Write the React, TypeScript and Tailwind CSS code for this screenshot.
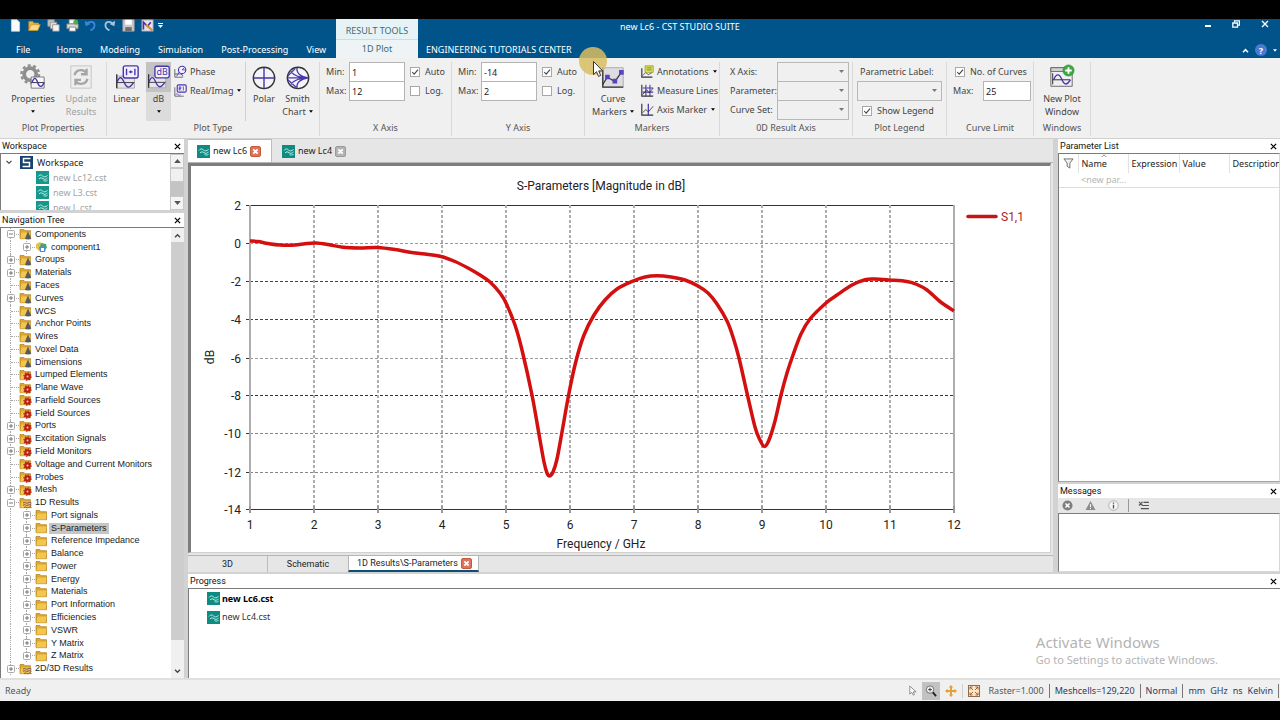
import React from "react";

const ui = "font-['Noto_Sans',sans-serif]";

/* ---------- small shared drawings ---------- */

function CloseX({ className = "size-[7px]" }: { className?: string }) {
  return (
    <svg viewBox="0 0 8 8" className={className} aria-hidden="true">
      <path d="M1 1l6 6M7 1L1 7" stroke="currentColor" strokeWidth="1.4" fill="none" />
    </svg>
  );
}

function Caret({ className = "w-[5px] h-[3px]" }: { className?: string }) {
  return (
    <svg viewBox="0 0 5 3" className={className} aria-hidden="true">
      <path d="M0 0h5L2.5 3z" fill="currentColor" />
    </svg>
  );
}

function CstIcon({ faded = false }: { faded?: boolean }) {
  return (
    <svg viewBox="0 0 13 13" className="size-[13px] shrink-0" aria-hidden="true">
      <rect width="13" height="13" fill={faded ? "#17978c" : "#0e8c82"} />
      <path
        d="M2 5.500c1.500-2 3-2 4.500-.5S9.500 6 11.500 4.500M3 8c1.500-1.500 2.500-1.500 4-.3s3 .5 4.500-.7M7.500 9.600c1.300.6 2.500.5 4-.2"
        stroke="#b9efe9"
        strokeWidth="1"
        fill="none"
      />
    </svg>
  );
}

function TabClose({ active, label }: { active: boolean; label: string }) {
  return (
    <button
      aria-label={label}
      className={
        active
          ? "flex size-[11px] items-center justify-center rounded-[2px] border border-[#c65a3f] bg-[#dd735a] text-white"
          : "flex size-[11px] items-center justify-center rounded-[2px] border border-[#9a9a9a] bg-[#b4b4b4] text-white"
      }
    >
      <svg viewBox="0 0 8 8" className="size-[7px]" aria-hidden="true">
        <path d="M1.500 1.500l5 5M6.500 1.500l-5 5" stroke="currentColor" strokeWidth="2" />
      </svg>
    </button>
  );
}

function PanelTitle({ title }: { title: string }) {
  return (
    <div className="flex h-[14px] shrink-0 items-center justify-between bg-white pr-[3px] pl-[2px] font-['Roboto',sans-serif] text-[9px] leading-[14px] text-[#111]">
      <h2>{title}</h2>
      <button aria-label={`Close ${title}`} className="text-black">
        <CloseX />
      </button>
    </div>
  );
}

/* ---------- title bar ---------- */

const quickIcons: { name: string; art: React.ReactNode }[] = [
  { name: "New", art: <path d="M3 1h7l3 3v11H3z" fill="#fafafa" stroke="#ccd6de" /> },
  {
    name: "Open",
    art: (
      <>
        <path d="M1 14V3h5l1 2h6v3" fill="#e9b84e" stroke="#b98822" />
        <path d="M1 14l3-7h11l-3 7z" fill="#fbdc85" stroke="#d19a2c" />
      </>
    ),
  },
  {
    name: "Copy view",
    art: (
      <>
        <path d="M1 1h8v8H1z" fill="#c7c7c7" stroke="#8e8e8e" />
        <path d="M4 4h8v8H4z" fill="#dedede" stroke="#8e8e8e" />
        <path d="M7 7h8v8H7z" fill="#f4f4f4" stroke="#8e8e8e" />
      </>
    ),
  },
  {
    name: "Print",
    art: (
      <>
        <path d="M4 1h7v5H4z" fill="#fff" stroke="#aaa" />
        <path d="M1 6h14v6H1z" fill="#d8d8d8" stroke="#777" />
        <path d="M4 10h8v5H4z" fill="#fff" stroke="#777" />
        <circle cx="12" cy="4" r="3" fill="#47b04b" />
      </>
    ),
  },
  {
    name: "Undo",
    art: (
      <>
        <path d="M1 2l1 7 6-3z" fill="#3f86d8" />
        <path d="M4 6c3-4 9-3 9 1.500C13 11 10.500 13 8 14" fill="none" stroke="#3f86d8" strokeWidth="2.200" />
      </>
    ),
  },
  {
    name: "Redo",
    art: (
      <>
        <path d="M15 2l-1 7-6-3z" fill="#a9c3d6" />
        <path d="M12 6C9 2 3 3 3 7.500 3 11 5.500 13 8 14" fill="none" stroke="#a9c3d6" strokeWidth="2.200" />
      </>
    ),
  },
  {
    name: "Save",
    art: (
      <>
        <path d="M1 1h14v14H1z" fill="#c9c9c9" stroke="#9a9a9a" />
        <path d="M4 1h8v6H4z" fill="#fff" />
        <path d="M4 10h8v5H4z" fill="#6f6f6f" />
      </>
    ),
  },
  {
    name: "Macro",
    art: (
      <>
        <path d="M1 1h14v14H1z" fill="#e6e2f0" stroke="#8d8d9b" />
        <path d="M3 13V4l5 5 4-5" stroke="#45389c" strokeWidth="2" fill="none" />
        <path d="M6 7l8 7" stroke="#e0912d" strokeWidth="2.500" />
      </>
    ),
  },
];

const tabs = ["Home", "Modeling", "Simulation", "Post-Processing", "View"];

function TitleBar() {
  return (
    <header className="flex h-[39px] shrink-0 bg-[#00548a] text-[9px] text-white">
      <div className="flex w-[336px] shrink-0 flex-col">
        <div className="flex h-[13px] items-center">
          <div className="flex w-[154px] items-center justify-between pl-[9px]">
            {quickIcons.map((q) => (
              <button key={q.name} aria-label={q.name}>
                <svg viewBox="0 0 16 16" className="size-[13px]" aria-hidden="true">
                  {q.art}
                </svg>
              </button>
            ))}
          </div>
          <button aria-label="Customize quick access" className="ml-[4px] flex flex-col items-center gap-px">
            <span className="h-px w-[5px] bg-white" />
            <Caret />
          </button>
        </div>
        <nav className="flex flex-1 items-end gap-[18px] pb-px pl-[16px] leading-[14px]">
          <button className="mr-[8px]">File</button>
          {tabs.map((t) => (
            <button key={t} className="whitespace-nowrap">
              {t}
            </button>
          ))}
        </nav>
      </div>
      <div className="flex w-[82px] shrink-0 flex-col bg-[#eef4f6] text-center text-[#44686f]">
        <div className="flex h-[21px] items-end justify-center border-b border-[#c9dde2] bg-[#e6f3f6] leading-[16px] whitespace-nowrap">RESULT TOOLS</div>
        <button className="flex-1 leading-[18px]">1D Plot</button>
      </div>
      <div className="flex min-w-0 flex-1 flex-col justify-between pl-[8px]">
        <div className="flex h-[16px] items-center justify-between">
          <h1 className="pl-[194px] leading-[14px]">new Lc6 - CST STUDIO SUITE</h1>
          <div className="flex items-center gap-[21px] pr-[11px] pb-[6px]">
            <button aria-label="Minimize" className="pt-[4px]">
              <span className="block h-[2px] w-[6px] bg-white" />
            </button>
            <button aria-label="Restore">
              <svg viewBox="0 0 8 8" className="size-[8px]" aria-hidden="true">
                <path d="M2.500 2V.8h5v4.400H6M.8 3h4.700v4.200H.8z" stroke="#fff" strokeWidth="1.300" fill="none" />
              </svg>
            </button>
            <button aria-label="Close window">
              <CloseX className="size-[8px]" />
            </button>
          </div>
        </div>
        <div className="flex items-center justify-between pb-px">
          <button className="leading-[14px]">ENGINEERING TUTORIALS CENTER</button>
          <div className="flex items-center gap-[6px] pr-[3px]">
            <button aria-label="Collapse ribbon">
              <svg viewBox="0 0 8 6" className="h-[5px] w-[7px]" aria-hidden="true">
                <path d="M1 5l3-3 3 3" stroke="#fff" strokeWidth="1.800" fill="none" />
              </svg>
            </button>
            <button aria-label="Help" className="flex size-[12px] items-center justify-center rounded-full bg-[#4a7ad0] text-[9px] leading-none font-bold">
              ?
            </button>
            <Caret className="h-[3px] w-[4px]" />
          </div>
        </div>
      </div>
    </header>
  );
}

/* ---------- ribbon ---------- */

const purple = "#4636a8";

function SineFrame() {
  return (
    <>
      <path d="M3 13h19v13H3z" fill="#e6e6ea" stroke="#aaa" />
      <path d="M3 20h19" stroke="#333" strokeWidth="1" />
      <path d="M3 11v15" stroke="#222" strokeWidth="1.300" />
      <path d="M3 20c3-7 5-7 8 0s6 6 10 0" stroke={purple} strokeWidth="1.500" fill="none" />
    </>
  );
}

function Group({ label, width, children }: { label: string; width: string; children: React.ReactNode }) {
  return (
    <section className={`flex shrink-0 flex-col border-r border-[#d9d9d9] ${width}`}>
      <div className="flex h-[59px] min-w-0">{children}</div>
      <h2 className="text-center leading-[14px] text-[#555]">{label}</h2>
    </section>
  );
}

function BigButton({
  icon,
  line1,
  line2,
  caret = false,
  active = false,
  disabled = false,
  width,
}: {
  icon: React.ReactNode;
  line1: string;
  line2?: string;
  caret?: boolean;
  active?: boolean;
  disabled?: boolean;
  width: string;
}) {
  return (
    <button
      disabled={disabled}
      className={`flex shrink-0 flex-col items-center leading-[13px] whitespace-nowrap ${width} ${active ? "bg-[#dcdcdc]" : ""} ${disabled ? "text-[#a0a0a0]" : "text-[#444]"}`}
    >
      <span className={`flex h-[30px] w-full items-center justify-center ${active ? "bg-[#c3c3c3]" : ""}`}>
        <svg viewBox="0 0 28 28" className="size-[26px]" aria-hidden="true">
          {icon}
        </svg>
      </span>
      <span>{line1}</span>
      <span className="flex h-[13px] items-center gap-[3px]">
        {line2}
        {caret && <Caret className="h-[3px] w-[4px] text-black" />}
      </span>
    </button>
  );
}

function SmallButton({ icon, label, caret = false }: { icon: React.ReactNode; label: string; caret?: boolean }) {
  return (
    <button className="flex h-[19px] items-center gap-[3px] whitespace-nowrap">
      <svg viewBox="0 0 16 16" className="size-[13px] shrink-0" aria-hidden="true">
        {icon}
      </svg>
      {label}
      {caret && <Caret className="ml-px h-[3px] w-[4px] text-black" />}
    </button>
  );
}

function Check({ id, label, on = false }: { id: string; label: string; on?: boolean }) {
  return (
    <label htmlFor={id} className="flex h-[19px] items-center gap-[5px] whitespace-nowrap">
      <span className="grid">
        <input
          id={id}
          type="checkbox"
          defaultChecked={on}
          className="peer col-start-1 row-start-1 size-[10px] appearance-none border border-[#a8a8a8] bg-white"
        />
        <svg viewBox="0 0 10 10" className="pointer-events-none invisible col-start-1 row-start-1 size-[10px] peer-checked:visible" aria-hidden="true">
          <path d="M2.200 5l2 2.200L8 2.600" stroke="#444" strokeWidth="1.100" fill="none" />
        </svg>
      </span>
      {label}
    </label>
  );
}

function AxisFields({ axis, min, max }: { axis: string; min: string; max: string }) {
  const box = "h-[20px] w-[56px] border border-[#b4b4b4] bg-white px-[2px] text-[#222] outline-none";
  return (
    <div className="flex pl-[6px]">
      <div className="flex w-[23px] flex-col">
        <label htmlFor={`${axis}-min`} className="leading-[19px]">Min:</label>
        <label htmlFor={`${axis}-max`} className="leading-[19px]">Max:</label>
      </div>
      <div className="mr-[5px] flex flex-col -space-y-px">
        <input id={`${axis}-min`} defaultValue={min} className={box} />
        <input id={`${axis}-max`} defaultValue={max} className={box} />
      </div>
      <div className="flex flex-col">
        <Check id={`${axis}-auto`} label="Auto" on />
        <Check id={`${axis}-log`} label="Log." />
      </div>
    </div>
  );
}

function DropDown({ id, width }: { id: string; width: string }) {
  return (
    <span className={`relative block ${width}`}>
      <select id={id} className="block h-[20px] w-full appearance-none border border-[#b8b8b8] bg-[#f0f0f0]">
        <option value="" />
      </select>
      <Caret className="pointer-events-none absolute top-[8px] right-[5px] h-[3px] w-[5px] text-[#777]" />
    </span>
  );
}

function Ribbon() {
  return (
    <div className="flex h-[81px] shrink-0 border-b border-[#d0d0d0] bg-[#f0f0f0] pt-[4px] pb-[2px] text-[9px] text-[#444]">
      <Group label="Plot Properties" width="w-[107px]">
        <BigButton
          width="w-[66px]"
          line1="Properties"
          caret
          icon={
            <>
              <circle cx="11" cy="11" r="6.500" fill="none" stroke="#8e8e8e" strokeWidth="4" />
              <circle cx="11" cy="11" r="9.500" fill="none" stroke="#8e8e8e" strokeWidth="2.600" strokeDasharray="3.200 2.770" />
              <path d="M12 14h14v12H12z" fill="#f6f6fa" stroke="#777" />
              <path d="M12 20h14" stroke="#333" />
              <path d="M13 20c2-6 4-6 6 0s5 5 7 0" stroke={purple} strokeWidth="1.500" fill="none" />
            </>
          }
        />
        <BigButton
          width="w-[30px]"
          line1="Update"
          line2="Results"
          disabled
          icon={
            <>
              <path d="M3 2h22v24H3z" fill="#eee" stroke="#c2c2c2" />
              <path d="M7 12c2-7 11-7 13-1M20 5v6h-6M21 16c-2 7-11 7-13 1M8 23v-6h6" stroke="#a5a5a5" strokeWidth="2.500" fill="none" />
            </>
          }
        />
      </Group>
      <Group label="Plot Type" width="w-[213px]">
        <BigButton
          width="w-[39px]"
          line1="Linear"
          icon={
            <>
              <SineFrame />
              <rect x="10" y="2" width="16" height="13" rx="2" fill="#f3f1ff" stroke={purple} strokeWidth="1.500" />
              <path d="M13.500 5v7M22.500 5v7M16 8.500h4M18 7v3" stroke={purple} strokeWidth="1.500" />
            </>
          }
        />
        <BigButton
          width="w-[25px]"
          line1="dB"
          caret
          active
          icon={
            <>
              <SineFrame />
              <rect x="10" y="2" width="16" height="13" rx="2" fill="#f3f1ff" stroke={purple} strokeWidth="1.500" />
              <text x="18" y="12" fontSize="10" textAnchor="middle" fill={purple} fontFamily="Noto Sans, sans-serif">dB</text>
            </>
          }
        />
        <div className="flex w-[75px] shrink-0 flex-col border-r border-[#d0d0d0] pl-[3px]">
          <SmallButton
            label="Phase"
            icon={
              <>
                <path d="M1 5v10h10" stroke="#555" fill="none" />
                <path d="M1 11h10M3 14l4-6 4 6" stroke={purple} fill="none" />
                <circle cx="10" cy="6" r="4.500" fill="#f3f1ff" stroke={purple} strokeWidth="1.400" />
                <path d="M10 6l3-3M10 6h4" stroke={purple} />
              </>
            }
          />
          <SmallButton
            label="Real/Imag"
            caret
            icon={
              <>
                <path d="M1 4v11h11" stroke="#555" fill="none" />
                <path d="M2 13c2-3 4 3 6 0" stroke={purple} fill="none" />
                <rect x="4" y="1" width="11" height="9" rx="1.500" fill="#f3f1ff" stroke={purple} strokeWidth="1.400" />
                <path d="M6.500 8V3.500h2v2h-2l2 2.500M11.500 3v5" stroke={purple} fill="none" />
              </>
            }
          />
        </div>
        <BigButton
          width="w-[36px]"
          line1="Polar"
          icon={
            <>
              <circle cx="14" cy="15" r="11.500" fill="#f4f4fb" stroke="#333" strokeWidth="1.500" />
              <path d="M14 4v22M3 15h22" stroke={purple} strokeWidth="1.500" />
            </>
          }
        />
        <BigButton
          width="w-[31px]"
          line1="Smith"
          line2="Chart"
          caret
          icon={
            <>
              <circle cx="14" cy="15" r="11.500" fill="#f4f4fb" stroke="#333" strokeWidth="1.500" />
              <path d="M3 15h22M6 8c5 6 12 7 19 7M6 22c5-6 12-7 19-7M13 4c-1 6 4 10 12 11M13 26c-1-6 4-10 12-11M3 13l8-8M3 17l9 8" stroke={purple} strokeWidth="1.400" fill="none" />
            </>
          }
        />
      </Group>
      <Group label="X Axis" width="w-[132px]">
        <AxisFields axis="x" min="1" max="12" />
      </Group>
      <Group label="Y Axis" width="w-[133px]">
        <AxisFields axis="y" min="-14" max="2" />
      </Group>
      <Group label="Markers" width="w-[135px]">
        <BigButton
          width="w-[56px]"
          line1="Curve"
          line2="Markers"
          caret
          icon={
            <>
              <path d="M3 4h22v21H3z" fill="#dcdce2" stroke="#aaa" />
              <path d="M3 4v21h22" stroke="#333" strokeWidth="1.400" fill="none" />
              <path d="M3 22L8 14l8 5 7-10" stroke="#333" strokeWidth="1.300" fill="none" />
              <path d="M5.500 11.500h5v5h-5zM13.500 16h5v5h-5zM20.500 6.500h5v5h-5z" fill="#5546bd" />
            </>
          }
        />
        <div className="flex flex-col">
          <SmallButton
            label="Annotations"
            caret
            icon={
              <>
                <path d="M1 4v11h13" stroke="#333" strokeWidth="1.400" fill="none" />
                <path d="M2 13l4-4 3 3 5-3" stroke={purple} fill="none" />
                <path d="M5 1h10v8H9l-2 2V9H5z" fill="#dfe35c" stroke="#979b22" />
                <path d="M7 3.500h6M7 6h6" stroke="#73761a" />
              </>
            }
          />
          <SmallButton
            label="Measure Lines"
            icon={
              <>
                <path d="M1 1v14h14" stroke="#333" strokeWidth="1.400" fill="none" />
                <path d="M2 5h13M2 10h13M6 1v14M11 1v14" stroke={purple} strokeWidth="1.300" />
                <path d="M2 13l5-6 3 4 5-6" stroke="#333" fill="none" />
              </>
            }
          />
          <SmallButton
            label="Axis Marker"
            caret
            icon={
              <>
                <path d="M1 1v14h14" stroke="#333" strokeWidth="1.400" fill="none" />
                <path d="M9 1v14" stroke={purple} strokeWidth="1.500" />
                <path d="M2 12l4-4 3 3 6-7" stroke="#333" fill="none" />
              </>
            }
          />
        </div>
      </Group>
      <Group label="0D Result Axis" width="w-[133px]">
        <div className="flex w-[57px] shrink-0 flex-col pl-[10px] leading-[19px] whitespace-nowrap">
          <label htmlFor="zx">X Axis:</label>
          <label htmlFor="zp">Parameter:</label>
          <label htmlFor="zc">Curve Set:</label>
        </div>
        <div className="flex flex-1 flex-col -space-y-px pr-[3px]">
          <DropDown id="zx" width="w-full" />
          <DropDown id="zp" width="w-full" />
          <DropDown id="zc" width="w-full" />
        </div>
      </Group>
      <Group label="Plot Legend" width="w-[94px]">
        <div className="flex flex-1 flex-col pr-[4px] pl-[4px]">
          <label htmlFor="plabel" className="pl-[3px] leading-[19px] whitespace-nowrap">Parametric Label:</label>
          <DropDown id="plabel" width="w-full" />
          <div className="pl-[5px]">
            <Check id="showlegend" label="Show Legend" on />
          </div>
        </div>
      </Group>
      <Group label="Curve Limit" width="w-[87px]">
        <div className="flex flex-col pl-[6px]">
          <div className="pl-[2px]">
            <Check id="nocurves" label="No. of Curves" on />
          </div>
          <div className="flex">
            <label htmlFor="climit" className="w-[30px] leading-[19px]">Max:</label>
            <input id="climit" defaultValue="25" className="h-[20px] w-[48px] border border-[#b4b4b4] bg-white px-[2px] text-[#222] outline-none" />
          </div>
        </div>
      </Group>
      <Group label="Windows" width="w-[57px]">
        <BigButton
          width="w-full"
          line1="New Plot"
          line2="Window"
          icon={
            <>
              <path d="M2 4h23v20H2z" fill="#efeff2" stroke="#666" />
              <path d="M2 4h23v4H2z" fill="#d4d4d4" stroke="#666" />
              <path d="M4 17h19M4 10v12" stroke="#222" />
              <path d="M5 17c3-7 6-7 9 0s6 5 9 0" stroke={purple} strokeWidth="1.500" fill="none" />
              <circle cx="21" cy="7" r="6" fill="#3fa845" stroke="#2a7d30" strokeWidth=".6" />
              <path d="M21 3.500v7M17.500 7h7" stroke="#fff" strokeWidth="2" />
            </>
          }
        />
      </Group>
    </div>
  );
}

/* ---------- workspace and navigation tree ---------- */

function Workspace() {
  return (
    <section className="flex flex-col bg-white">
      <PanelTitle title="Workspace" />
      <div className="flex h-[57px] overflow-hidden border-t border-l border-[#7b7b7b]">
        <ul className="flex-1 overflow-hidden text-[9px] leading-[15px] text-[#a3a3a3]">
          <li className="flex h-[16px] items-center gap-[4px] pl-[4px] text-[#222]">
            <svg viewBox="0 0 8 6" className="mr-[3px] h-[5px] w-[8px]" aria-hidden="true">
              <path d="M1 1l3 3 3-3" stroke="#333" strokeWidth="1.300" fill="none" />
            </svg>
            <svg viewBox="0 0 13 13" className="size-[13px]" aria-hidden="true">
              <rect width="13" height="13" fill="#15416f" />
              <path d="M10.500 2.500h-7v4h6v4h-7" stroke="#fff" strokeWidth="1.500" fill="none" />
            </svg>
            Workspace
          </li>
          {["new Lc12.cst", "new L3.cst", "new L.cst"].map((f) => (
            <li key={f} className="flex h-[15px] items-center gap-[4px] pl-[35px]">
              <CstIcon faded />
              {f}
            </li>
          ))}
        </ul>
        <div className="flex w-[14px] flex-col bg-[#c4c4c4] text-[#555]">
          <button aria-label="Scroll up" className="flex h-[14px] items-center justify-center border border-[#c8c8c8] bg-[#f4f4f4]">
            <Caret className="h-[4px] w-[7px] rotate-180" />
          </button>
          <div className="h-[14px] border border-[#c8c8c8] bg-[#f0f0f0]" />
          <button aria-label="Scroll down" className="mt-auto flex h-[14px] items-center justify-center border border-[#c8c8c8] bg-[#f4f4f4]">
            <Caret className="h-[4px] w-[7px]" />
          </button>
        </div>
      </div>
    </section>
  );
}

type Mark = "cone" | "gear" | "waves" | "none" | "part";
type Node = { name: string; mark: Mark; toggle?: "+" | "-"; child?: boolean; selected?: boolean };

const nodes: Node[] = [
  { name: "Components", mark: "cone", toggle: "-" },
  { name: "component1", mark: "part", toggle: "+", child: true },
  { name: "Groups", mark: "cone", toggle: "+" },
  { name: "Materials", mark: "cone", toggle: "+" },
  { name: "Faces", mark: "cone" },
  { name: "Curves", mark: "cone", toggle: "+" },
  { name: "WCS", mark: "cone" },
  { name: "Anchor Points", mark: "cone" },
  { name: "Wires", mark: "cone" },
  { name: "Voxel Data", mark: "cone" },
  { name: "Dimensions", mark: "cone" },
  { name: "Lumped Elements", mark: "gear" },
  { name: "Plane Wave", mark: "gear" },
  { name: "Farfield Sources", mark: "gear" },
  { name: "Field Sources", mark: "gear" },
  { name: "Ports", mark: "gear", toggle: "+" },
  { name: "Excitation Signals", mark: "gear", toggle: "+" },
  { name: "Field Monitors", mark: "gear", toggle: "+" },
  { name: "Voltage and Current Monitors", mark: "gear" },
  { name: "Probes", mark: "gear" },
  { name: "Mesh", mark: "gear", toggle: "+" },
  { name: "1D Results", mark: "waves", toggle: "-" },
  { name: "Port signals", mark: "none", toggle: "+", child: true },
  { name: "S-Parameters", mark: "none", toggle: "+", child: true, selected: true },
  { name: "Reference Impedance", mark: "none", toggle: "+", child: true },
  { name: "Balance", mark: "none", toggle: "+", child: true },
  { name: "Power", mark: "none", toggle: "+", child: true },
  { name: "Energy", mark: "none", toggle: "+", child: true },
  { name: "Materials", mark: "none", toggle: "+", child: true },
  { name: "Port Information", mark: "none", toggle: "+", child: true },
  { name: "Efficiencies", mark: "none", toggle: "+", child: true },
  { name: "VSWR", mark: "none", toggle: "+", child: true },
  { name: "Y Matrix", mark: "none", toggle: "+", child: true },
  { name: "Z Matrix", mark: "none", toggle: "+", child: true },
  { name: "2D/3D Results", mark: "waves", toggle: "+" },
];

function FolderIcon({ mark }: { mark: Mark }) {
  if (mark === "part") {
    return (
      <svg viewBox="0 0 13 12" className="h-[12px] w-[13px] shrink-0" aria-hidden="true">
        <path d="M1 3l4-2 3 2v5L4 10 1 7z" fill="#e3c24b" />
        <path d="M6 2l5 1 1 4-4 2-3-3z" fill="#4aa85d" />
        <path d="M4 6l4-1 3 2-1 4-5 0z" fill="#4c8be0" />
        <path d="M6 7h3v3H6z" fill="#fff" />
      </svg>
    );
  }
  return (
    <svg viewBox="0 0 13 12" className="h-[12px] w-[13px] shrink-0" aria-hidden="true">
      <path d="M1 1.500h4l1 1.200h5.500v8H1z" fill="#dda62c" stroke="#b07f1a" strokeWidth=".7" />
      <path d="M1.300 10.500L2.500 4.500h9l-.8 6z" fill="#f3c650" />
      {mark === "cone" && <path d="M9 3.500l3.200 7c-1 1.200-5 1.200-6.200 0z" fill="#575a60" />}
      {mark === "gear" && (
        <>
          <circle cx="8.500" cy="7.500" r="3.300" fill="#bd2018" />
          <circle cx="8.500" cy="7.500" r="3.600" fill="none" stroke="#bd2018" strokeWidth="1.300" strokeDasharray="1.400 1.400" />
          <circle cx="8.500" cy="7.500" r="1" fill="#f5c7a8" />
        </>
      )}
      {mark === "waves" && (
        <path d="M4 6c2-1.500 3 1 5 0s2-.5 3.500 0M4 8.200c2-1.500 3 1 5 0s2-.5 3.500 0M5 10.500c2-1.500 3 1 4.500 0s2-.5 3 0" stroke="#7a5160" strokeWidth="1" fill="none" />
      )}
    </svg>
  );
}

function TreeCell({ toggle, branch }: { toggle?: "+" | "-"; branch: boolean }) {
  return (
    <span className="relative flex h-full w-[16px] shrink-0 items-center justify-center">
      <span className="absolute inset-y-0 left-[7px] border-l border-dotted border-[#a8a8a8]" />
      {branch && <span className="absolute right-0 left-[8px] border-t border-dotted border-[#a8a8a8]" />}
      {toggle && (
        <svg viewBox="0 0 8 8" className="relative size-[8px]" aria-hidden="true">
          <rect x=".5" y=".5" width="7" height="7" rx="1" fill="#fff" stroke="#a8a8a8" />
          <path d={toggle === "+" ? "M2 4h4M4 2v4" : "M2 4h4"} stroke="#555" strokeWidth=".8" />
        </svg>
      )}
    </span>
  );
}

function NavigationTree() {
  return (
    <section className="flex min-h-0 flex-1 flex-col bg-white">
      <PanelTitle title="Navigation Tree" />
      <div className="flex min-h-0 flex-1 border-t border-l border-[#7b7b7b]">
        <ul className="grid min-w-0 flex-1 auto-rows-fr overflow-hidden pb-[3px] pl-[2px] font-['Liberation_Sans',Arial,sans-serif] text-[9px] leading-[11px] text-[#222]">
          {nodes.map((n, i) => (
            <li key={i} className="flex min-h-0 items-center whitespace-nowrap">
              <TreeCell toggle={n.child ? undefined : n.toggle} branch={!n.child} />
              {n.child && <TreeCell toggle={n.toggle} branch />}
              <FolderIcon mark={n.mark} />
              <span className={n.selected ? "ml-px bg-[#c6c6c6] px-[2px]" : "ml-px px-[2px]"}>{n.name}</span>
            </li>
          ))}
        </ul>
        <div className="flex w-[13px] flex-col items-center bg-[#f0f0f0] text-[#444]">
          <button aria-label="Scroll up" className="flex h-[14px] items-center">
            <svg viewBox="0 0 8 6" className="h-[5px] w-[7px]" aria-hidden="true">
              <path d="M1 5l3-3 3 3" stroke="currentColor" strokeWidth="1.600" fill="none" />
            </svg>
          </button>
          <div className="w-full flex-1 bg-[#cdcdcd]" />
          <div className="h-[24px] w-full" />
          <button aria-label="Scroll down" className="flex h-[14px] items-center">
            <svg viewBox="0 0 8 6" className="h-[5px] w-[7px]" aria-hidden="true">
              <path d="M1 1l3 3 3-3" stroke="currentColor" strokeWidth="1.600" fill="none" />
            </svg>
          </button>
        </div>
      </div>
    </section>
  );
}

/* ---------- plot ---------- */

const trace: [number, number][] = [
  [250, 241], [258, 241.5], [268, 243.5], [280, 245], [295, 245], [305, 243.7], [316, 243], [328, 244.5],
  [343, 247.3], [360, 248], [377, 247.5], [395, 249.5], [410, 252.3], [425, 254], [441, 256.5], [455, 261.5],
  [468, 268], [480, 275], [490, 282], [500, 293], [506, 303], [515, 325], [522, 350], [532, 395], [540, 440],
  [544, 462], [547, 473], [549.5, 476], [553, 472], [557, 459], [562, 432], [569, 393], [576, 361], [584, 335],
  [594, 315], [605, 300], [617, 289], [633, 281], [645, 277], [657, 275.8], [671, 277], [685, 280], [698, 286],
  [708, 293], [717, 304], [727, 321], [733, 337], [739, 358], [747, 393], [755, 427], [760, 440], [764.5, 446.5],
  [769, 440], [775, 421], [781, 395], [787, 373], [793, 355], [801, 334], [810, 319], [826, 303], [837, 295],
  [852, 285], [865, 279.7], [875, 279], [890, 280], [907, 281.5], [917, 284.5], [927, 290], [940, 301.5], [954, 311],
];

function smooth(p: [number, number][]) {
  let d = `M${p[0][0]} ${p[0][1]}`;
  for (let i = 0; i < p.length - 1; i++) {
    const a = p[Math.max(0, i - 1)];
    const b = p[i];
    const c = p[i + 1];
    const e = p[Math.min(p.length - 1, i + 2)];
    d += `C${b[0] + (c[0] - a[0]) / 6} ${b[1] + (c[1] - a[1]) / 6} ${c[0] - (e[0] - b[0]) / 6} ${c[1] - (e[1] - b[1]) / 6} ${c[0]} ${c[1]}`;
  }
  return d;
}

const gridY = [205.5, 243.5, 281.5, 319.5, 358.5, 395.5, 433.5, 472.5, 509.5];
const gridTone = ["#333", "#999", "#444", "#444", "#999", "#333", "#888", "#888", "#333"];

function Plot() {
  return (
    <svg viewBox="191 166 859 386" className="h-full w-full bg-white font-['Roboto',sans-serif] text-[12px]" fill="#222" role="img" aria-label="S-Parameters plot">
      <text x="601" y="190" textAnchor="middle">S-Parameters [Magnitude in dB]</text>
      {gridY.map((y, i) => (
        <g key={y}>
          <path d={`M250 ${y}H954`} stroke={gridTone[i]} strokeDasharray={i === 0 || i === 8 ? undefined : "3 2"} />
          <path d={`M246 ${y}h4`} stroke="#333" />
          <text x="241" y={y + 4.5} textAnchor="end">{2 - 2 * i}</text>
        </g>
      ))}
      {Array.from({ length: 12 }, (_, i) => (
        <g key={i}>
          <path
            d={`M${250 + 64 * i} 205V510`}
            stroke="#adadad"
            strokeWidth={2}
            strokeDasharray={i === 0 || i === 11 ? undefined : "3 2"}
          />
          <path d={`M${250 + 64 * i} 506v7`} stroke="#999" strokeWidth="2" />
          <text x={250 + 64 * i} y="529" textAnchor="middle">{i + 1}</text>
        </g>
      ))}
      <path d={smooth(trace)} fill="none" stroke="#d40f0f" strokeWidth="3.500" strokeLinejoin="round" />
      <text x="601" y="548" textAnchor="middle">Frequency / GHz</text>
      <text x="214" y="357" textAnchor="middle" transform="rotate(-90 214 357)">dB</text>
      <path d="M968 216.500h28" stroke="#c81414" strokeWidth="3.500" strokeLinecap="round" />
      <text x="1001" y="221" fill="#b01c1c">S1,1</text>
    </svg>
  );
}

function Documents() {
  return (
    <section className="flex min-w-0 flex-1 flex-col bg-[#e6e6e6]">
      <div className="flex h-[23px] shrink-0 text-[9px] leading-[14px] text-[#222]">
        <div className="flex w-[84px] items-center gap-[3px] border-t border-r border-[#bdbdbd] bg-white pl-[9px] whitespace-nowrap">
          <CstIcon />
          <button>new Lc6</button>
          <TabClose active label="Close new Lc6" />
        </div>
        <div className="flex items-center gap-[3px] pt-px pl-[10px] whitespace-nowrap">
          <CstIcon />
          <button>new Lc4</button>
          <TabClose active={false} label="Close new Lc4" />
        </div>
      </div>
      <div className="min-h-0 flex-1 border-t border-[#b5b5b5] bg-[#e6e6e6] pr-[2px] pb-[2px]">
        <div className="h-full border-t-[3px] border-r border-b border-l-[3px] border-t-[#7d7d7d] border-r-[#d0d0d0] border-b-[#d0d0d0] border-l-[#7d7d7d] bg-white">
          <Plot />
        </div>
      </div>
      <div className="flex h-[17px] shrink-0 border-t border-[#b5b5b5] font-['Roboto',sans-serif] text-[9px] leading-[14px] text-[#222]">
        <button className="w-[80px] border-r border-[#bbb]">3D</button>
        <button className="w-[80px]">Schematic</button>
        <div className="flex items-center gap-[3px] border-r border-b-2 border-l border-[#b5b5b5] border-b-[#0b4f76] bg-white pr-[6px] pl-[8px] whitespace-nowrap">
          <button>1D Results\S-Parameters</button>
          <TabClose active label="Close 1D Results" />
        </div>
      </div>
    </section>
  );
}

/* ---------- right side ---------- */

function ParameterList() {
  return (
    <section className="flex min-h-0 flex-1 flex-col bg-white">
      <PanelTitle title="Parameter List" />
      <div className="min-h-0 flex-1 overflow-hidden border border-[#7b7b7b] border-r-[#d8d8d8] border-b-[#a5a5a5]">
        <table className="w-full table-fixed border-collapse text-left text-[9px] leading-[14px] text-[#222]">
          <thead>
            <tr className="h-[19px]">
              <th scope="col" className="w-[19px] border-r border-[#e2e2e2]">
                <svg viewBox="0 0 12 12" className="mx-auto size-[11px]" aria-label="Filter">
                  <path d="M1 1h10L7.500 5.500V11l-3-2V5.500z" fill="#f2f2f2" stroke="#666" />
                </svg>
              </th>
              <th scope="col" className="relative w-[50px] border-r border-[#e2e2e2] pl-[3px] font-normal">
                Name
                <svg viewBox="0 0 8 4" className="absolute top-0 left-[22px] h-[3px] w-[6px]" aria-hidden="true">
                  <path d="M1 4l3-3 3 3" stroke="#666" fill="none" />
                </svg>
              </th>
              <th scope="col" className="w-[51px] border-r border-[#e2e2e2] pl-[3px] font-normal">Expression</th>
              <th scope="col" className="w-[50px] border-r border-[#e2e2e2] pl-[3px] font-normal">Value</th>
              <th scope="col" className="overflow-hidden pl-[3px] font-normal whitespace-nowrap">Description</th>
            </tr>
          </thead>
          <tbody>
            <tr className="h-[14px] border-b border-[#ddd] text-[#b5b5b5]">
              <td />
              <td className="pl-[3px] whitespace-nowrap">&lt;new par...</td>
              <td />
              <td />
              <td />
            </tr>
          </tbody>
        </table>
      </div>
    </section>
  );
}

function Messages() {
  return (
    <section className="flex shrink-0 flex-col bg-[#e6e6e6]">
      <PanelTitle title="Messages" />
      <div className="flex h-[15px] items-center gap-[12px] pl-[4px]">
        <button aria-label="Errors">
          <svg viewBox="0 0 12 12" className="size-[11px]" aria-hidden="true">
            <circle cx="6" cy="6" r="5.500" fill="#7f7f7f" />
            <path d="M3.800 3.800l4.400 4.400M8.200 3.800L3.800 8.200" stroke="#fff" strokeWidth="1.600" />
          </svg>
        </button>
        <button aria-label="Warnings">
          <svg viewBox="0 0 12 12" className="size-[11px]" aria-hidden="true">
            <path d="M6 1l5.500 10H.5z" fill="#8c8c8c" />
            <path d="M6 4.500v3M6 8.500v1.300" stroke="#fff" strokeWidth="1.200" />
          </svg>
        </button>
        <button aria-label="Information">
          <svg viewBox="0 0 12 12" className="size-[11px]" aria-hidden="true">
            <circle cx="6" cy="6" r="5.200" fill="#f6f6f6" stroke="#999" strokeWidth=".8" />
            <path d="M6 5.200v4M6 2.800v1.300" stroke="#555" strokeWidth="1.500" />
          </svg>
        </button>
        <span className="-mx-[3px] h-[13px] w-px bg-[#999]" />
        <button aria-label="Clear messages">
          <svg viewBox="0 0 12 10" className="h-[9px] w-[11px]" aria-hidden="true">
            <path d="M6 1.500h6M5 5h7M3 8.500h9M1 1l4 4M5 1L1 5" stroke="#555" strokeWidth="1.200" />
          </svg>
        </button>
      </div>
      <div className="h-[59px] border border-[#7b7b7b] border-r-[#d8d8d8] border-b-[#d8d8d8] bg-white" />
    </section>
  );
}

function Progress() {
  return (
    <section className="relative flex h-[104px] shrink-0 flex-col bg-white">
      <PanelTitle title="Progress" />
      <ul className="flex-1 border-t border-l border-[#7b7b7b] pl-[18px] text-[9px] leading-[14px] text-[#333]">
        <li className="flex h-[19px] items-center gap-[2px] font-bold text-black">
          <CstIcon />
          new Lc6.cst
        </li>
        <li className="flex h-[18px] items-center gap-[2px]">
          <CstIcon />
          new Lc4.cst
        </li>
      </ul>
      <div className="pointer-events-none absolute right-[62px] bottom-[10px] text-[#b4b4b4]">
        <p className="text-[15px] leading-[20px]">Activate Windows</p>
        <p className="text-[11px] leading-[16px]">Go to Settings to activate Windows.</p>
      </div>
    </section>
  );
}

/* ---------- status bar ---------- */

function StatusBar() {
  const sep = <span className="h-[14px] w-px bg-[#777]" />;
  return (
    <footer className="flex h-[23px] shrink-0 items-center justify-between border-t-2 border-[#e0e0e0] bg-[#f0f0f0] pl-[5px] text-[9px] leading-[14px] text-[#555]">
      <span>Ready</span>
      <div className="flex items-center gap-[5px] pr-px whitespace-nowrap">
        <button aria-label="Select">
          <svg viewBox="0 0 10 12" className="h-[11px] w-[9px]" aria-hidden="true">
            <path d="M2 1v9l2.200-2 1.600 3.200 1.500-.7L5.800 7.500H9z" fill="#fff" stroke="#777" strokeWidth=".9" />
          </svg>
        </button>
        <button aria-label="Zoom" className="flex h-[18px] w-[18px] items-center justify-center bg-[#c2c2c2]">
          <svg viewBox="0 0 14 14" className="size-[13px]" aria-hidden="true">
            <circle cx="6.500" cy="6" r="4" fill="#f4f4f4" stroke="#666" />
            <path d="M4.500 6h4M6.500 4v4" stroke="#333" />
            <path d="M9.500 9l3.500 4" stroke="#222" strokeWidth="2" />
          </svg>
        </button>
        <button aria-label="Pan">
          <svg viewBox="0 0 12 12" className="size-[12px]" aria-hidden="true">
            <path d="M6 0l2.300 2.500H7V5h2.500V3.700L12 6 9.500 8.300V7H7v2.500h1.300L6 12 3.700 9.500H5V7H2.500v1.300L0 6l2.500-2.300V5H5V2.500H3.700z" fill="#e3a13a" />
          </svg>
        </button>
        <span className="h-[14px] w-px bg-[#d0d0d0]" />
        <button aria-label="Fit to window" className="mr-[4px]">
          <svg viewBox="0 0 12 12" className="size-[12px]" aria-hidden="true">
            <rect x=".5" y=".5" width="11" height="11" fill="#fbe6c8" stroke="#8b6f55" />
            <path d="M2 4.500V2h2.500M7.500 2H10v2.500M10 7.500V10H7.500M4.500 10H2V7.500M2 2l3 3M10 2L7 5M10 10L7 7M2 10l3-3" stroke="#a5541f" strokeWidth=".9" fill="none" />
          </svg>
        </button>
        <span>Raster=1.000</span>
        {sep}
        <span className="text-[#2b3c62]">Meshcells=129,220</span>
        {sep}
        <span className="text-[#2b3c62]">Normal</span>
        {sep}
        <span className="text-[#2b3c62]">mm</span>
        <span className="text-[#2b3c62]">GHz</span>
        <span className="text-[#2b3c62]">ns</span>
        <span className="text-[#2b3c62]">Kelvin</span>
        {sep}
      </div>
    </footer>
  );
}

export default function App() {
  return (
    <div className={`relative flex h-screen flex-col overflow-hidden bg-black py-[19px] ${ui}`}>
      <TitleBar />
      <Ribbon />
      <main className="flex min-h-0 flex-1 gap-[4px] bg-[#d2d2d2]">
        <div className="flex w-[184px] shrink-0 flex-col gap-[3px]">
          <Workspace />
          <NavigationTree />
        </div>
        <div className="flex min-w-0 flex-1 flex-col gap-[2px]">
          <div className="flex min-h-0 flex-1 gap-[5px]">
            <Documents />
            <div className="flex w-[222px] shrink-0 flex-col gap-[2px]">
              <ParameterList />
              <Messages />
            </div>
          </div>
          <Progress />
        </div>
      </main>
      <StatusBar />
      <div className="pointer-events-none absolute top-[47px] left-[579px]">
        <svg viewBox="0 0 28 30" className="h-[30px] w-[28px]" aria-hidden="true">
          <circle cx="14" cy="14" r="14" fill="#d9bd62" fillOpacity=".85" />
          <path d="M14.500 14.500v13l3-2.800 2 4.700 2.200-1-2-4.500h4z" fill="#fff" stroke="#222" strokeWidth=".9" />
        </svg>
      </div>
    </div>
  );
}
